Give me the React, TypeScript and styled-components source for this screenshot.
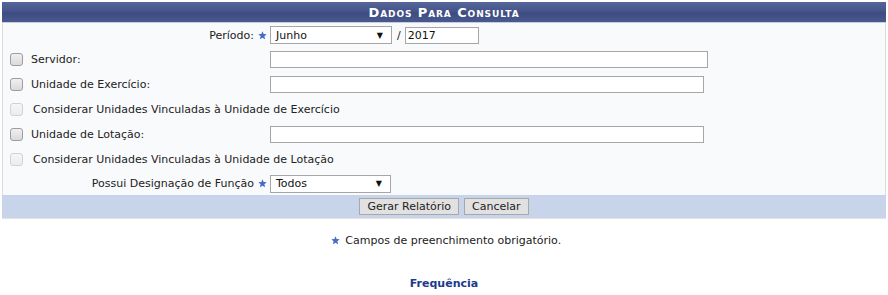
import styled, { createGlobalStyle } from 'styled-components'

const GlobalStyle = createGlobalStyle`
	body {
		margin: 0;
		background: #fff;
		font-family: 'DejaVu Sans', Verdana, sans-serif;
		font-size: 11px;
		color: #222;
	}
`

type RowProps = {
	label: string
	kind: 'required' | 'check' | 'wide'
	children?: React.ReactNode
	disabled?: boolean
}

function Star() {
	return (
		<StarIcon viewBox="0 0 10 10" width="9" height="9">
			<polygon
				points="5,0.3 6.3,3.4 9.7,3.6 7.1,5.8 7.9,9.2 5,7.4 2.1,9.2 2.9,5.8 0.3,3.6 3.7,3.4"
				fill="#4a6cc4"
			/>
		</StarIcon>
	)
}

function FormRow({ label, kind, children, disabled }: RowProps) {
	if (kind === 'required') {
		return (
			<Row>
				<LabelCell $align="right">
					{label} <Star />
				</LabelCell>
				<FieldCell>{children}</FieldCell>
			</Row>
		)
	}

	if (kind === 'wide') {
		return (
			<Row>
				<CheckLabel $wide>
					<CheckBox $disabled={disabled} />
					<span>{label}</span>
				</CheckLabel>
			</Row>
		)
	}

	return (
		<Row>
			<LabelCell $align="left">
				<CheckLabel>
					<CheckBox $disabled={disabled} />
					<span>{label}</span>
				</CheckLabel>
			</LabelCell>
			<FieldCell>{children}</FieldCell>
		</Row>
	)
}

export default function App() {
	return (
		<Page>
			<GlobalStyle />
			<FormTable>
				<Caption>Dados Para Consulta</Caption>
				<Body>
					<FormRow label="Período:" kind="required">
						<Select $width={122}>
							<span>Junho</span>
							<Arrow>▼</Arrow>
						</Select>
						<Slash>/</Slash>
						<TextInput $width={74}>2017</TextInput>
					</FormRow>
					<FormRow label="Servidor:" kind="check">
						<TextInput $width={438} />
					</FormRow>
					<FormRow label="Unidade de Exercício:" kind="check">
						<TextInput $width={434} />
					</FormRow>
					<FormRow
						label="Considerar Unidades Vinculadas à Unidade de Exercício"
						kind="wide"
						disabled
					/>
					<FormRow label="Unidade de Lotação:" kind="check">
						<TextInput $width={434} />
					</FormRow>
					<FormRow
						label="Considerar Unidades Vinculadas à Unidade de Lotação"
						kind="wide"
						disabled
					/>
					<FormRow label="Possui Designação de Função" kind="required">
						<Select $width={121}>
							<span>Todos</span>
							<Arrow>▼</Arrow>
						</Select>
					</FormRow>
				</Body>
				<Footer>
					<Button>Gerar Relatório</Button>
					<Button>Cancelar</Button>
				</Footer>
			</FormTable>

			<Note>
				<Star /> Campos de preenchimento obrigatório.
			</Note>

			<SectionLink>Frequência</SectionLink>
		</Page>
	)
}

const Page = styled.div`
	padding: 2px 2px 0 2px;
`

const FormTable = styled.div`
	width: 884px;
	display: flex;
	flex-direction: column;
	border-bottom: 1px solid #e3e3e3;
`

const Caption = styled.div`
	height: 20px;
	display: flex;
	align-items: center;
	justify-content: center;
	background: linear-gradient(#56669a 0%, #45548a 45%, #3d4c80 55%, #4a5a8e 100%);
	border-bottom: 1px solid #c5cde0;
	color: #fff;
	font-weight: bold;
	font-variant: small-caps;
	font-size: 13px;
	letter-spacing: 0.9px;
`

const Body = styled.div`
	display: flex;
	flex-direction: column;
	background: #f9fafc;
	border-left: 1px solid #dcdcdc;
	border-right: 1px solid #dcdcdc;
`

const Row = styled.div`
	height: 25px;
	display: flex;
	align-items: center;

	&:first-child {
		height: 24px;
	}

	&:last-child {
		height: 23px;
	}
`

const LabelCell = styled.div<{ $align: 'left' | 'right' }>`
	width: 266px;
	display: flex;
	align-items: center;
	justify-content: ${(p) => (p.$align === 'right' ? 'flex-end' : 'flex-start')};
	padding-left: 7px;
	box-sizing: border-box;
	white-space: nowrap;
`

const CheckLabel = styled.label<{ $wide?: boolean }>`
	display: flex;
	align-items: center;
	gap: ${(p) => (p.$wide ? '10px' : '8px')};
	padding-left: ${(p) => (p.$wide ? '7px' : '0')};
`

const CheckBox = styled.span<{ $disabled?: boolean }>`
	width: 11px;
	height: 11px;
	border-radius: 3px;
	border: 1px solid ${(p) => (p.$disabled ? '#d2d2d2' : '#9d9d9d')};
	background: ${(p) =>
		p.$disabled
			? 'linear-gradient(#f6f6f6, #ececec)'
			: 'linear-gradient(#f0f0f0, #dadada)'};
`

const StarIcon = styled.svg`
	margin: 0 2px 0 4px;
	vertical-align: -1px;
`

const FieldCell = styled.div`
	display: flex;
	align-items: center;
	padding-left: 1px;
`

const Select = styled.div<{ $width: number }>`
	width: ${(p) => p.$width}px;
	height: 18px;
	box-sizing: border-box;
	border: 1px solid #a6a6a6;
	background: #fff;
	display: flex;
	align-items: center;
	justify-content: space-between;
	padding: 0 8px 0 5px;
	color: #111;
`

const Arrow = styled.span`
	font-size: 8px;
	color: #111;
`

const Slash = styled.span`
	margin: 0 4px 0 5px;
`

const TextInput = styled.div<{ $width: number }>`
	width: ${(p) => p.$width}px;
	height: 17px;
	box-sizing: border-box;
	border: 1px solid #a6a6a6;
	background: #fff;
	display: flex;
	align-items: center;
	padding-left: 2px;
	color: #111;
`

const Footer = styled.div`
	height: 23px;
	background: #c8d4ea;
	display: flex;
	align-items: center;
	justify-content: center;
	gap: 5px;
`

const Button = styled.button`
	height: 17px;
	padding: 0 7px;
	font-family: inherit;
	font-size: 11px;
	color: #222;
	background: #e1e1e1;
	border: 1px solid #a8a8a8;
	border-radius: 0;
`

const Note = styled.p`
	margin: 15px 0 0;
	text-align: center;
`

const SectionLink = styled.p`
	margin: 30px 0 0;
	text-align: center;
	font-weight: bold;
	color: #1d3a8a;
`
